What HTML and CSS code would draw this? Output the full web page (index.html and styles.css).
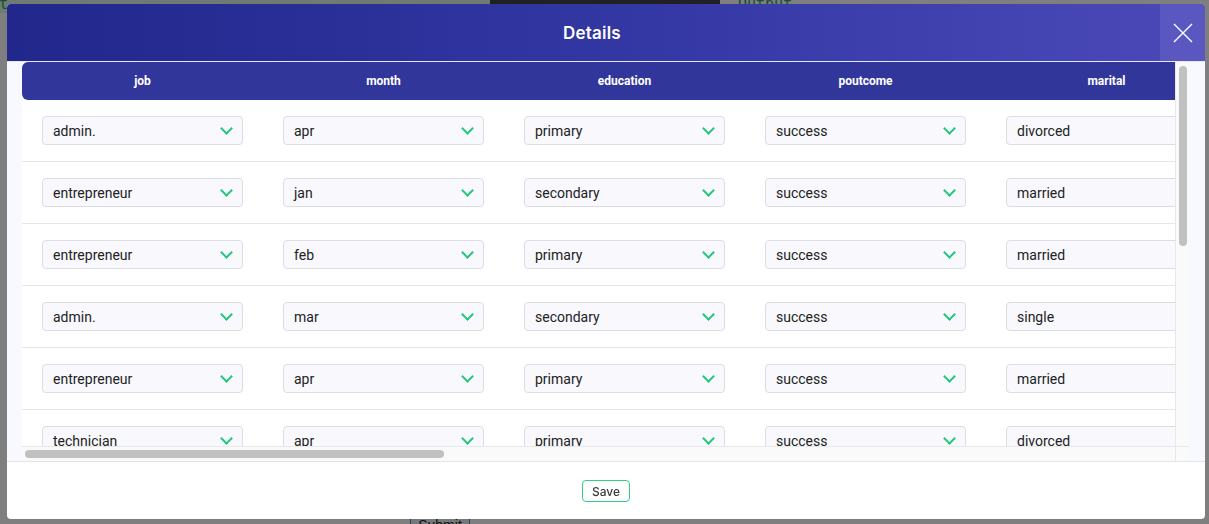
FILE: index.html
```html
<!DOCTYPE html>
<html lang="en">
<head>
<meta charset="utf-8">
<title>Details</title>
<link rel="stylesheet" href="styles.css">
</head>
<body>
<div class="page">
  <div class="page-top">
    <span class="page-label page-in">Input</span>
    <div class="page-image"></div>
    <span class="page-label page-out">Output</span>
  </div>
  <div class="page-bottom">
    <button class="page-submit">Submit</button>
  </div>
</div>

<div class="overlay">
  <div class="modal">
    <div class="modal-header">
      <h2 class="modal-title">Details</h2>
      <button class="modal-close" aria-label="Close">
        <svg width="20" height="20" viewBox="0 0 20 20"><path d="M1 1L19 19M19 1L1 19" stroke="#fff" stroke-width="1.4" fill="none"/></svg>
      </button>
    </div>
    <div class="modal-body">
      <div class="table-frame">
        <div class="table-view">
          <table class="grid">
            <thead>
              <tr><th>job</th><th>month</th><th>education</th><th>poutcome</th><th>marital</th><th>default</th><th>housing</th><th>loan</th><th>contact</th><th>day_of_week</th><th>age_group</th><th>balance_band</th><th>y</th></tr>
            </thead>
            <tbody>
              <tr><td><div class="select">admin.</div></td><td><div class="select">apr</div></td><td><div class="select">primary</div></td><td><div class="select">success</div></td><td><div class="select">divorced</div></td><td><div class="select">no</div></td><td><div class="select">yes</div></td><td><div class="select">no</div></td><td><div class="select">cellular</div></td><td><div class="select">mon</div></td><td><div class="select">adult</div></td><td><div class="select">low</div></td><td><div class="select">no</div></td></tr>
              <tr><td><div class="select">entrepreneur</div></td><td><div class="select">jan</div></td><td><div class="select">secondary</div></td><td><div class="select">success</div></td><td><div class="select">married</div></td><td><div class="select">no</div></td><td><div class="select">no</div></td><td><div class="select">no</div></td><td><div class="select">telephone</div></td><td><div class="select">tue</div></td><td><div class="select">adult</div></td><td><div class="select">medium</div></td><td><div class="select">yes</div></td></tr>
              <tr><td><div class="select">entrepreneur</div></td><td><div class="select">feb</div></td><td><div class="select">primary</div></td><td><div class="select">success</div></td><td><div class="select">married</div></td><td><div class="select">no</div></td><td><div class="select">yes</div></td><td><div class="select">yes</div></td><td><div class="select">cellular</div></td><td><div class="select">wed</div></td><td><div class="select">senior</div></td><td><div class="select">high</div></td><td><div class="select">no</div></td></tr>
              <tr><td><div class="select">admin.</div></td><td><div class="select">mar</div></td><td><div class="select">secondary</div></td><td><div class="select">success</div></td><td><div class="select">single</div></td><td><div class="select">no</div></td><td><div class="select">no</div></td><td><div class="select">no</div></td><td><div class="select">cellular</div></td><td><div class="select">thu</div></td><td><div class="select">young</div></td><td><div class="select">low</div></td><td><div class="select">yes</div></td></tr>
              <tr><td><div class="select">entrepreneur</div></td><td><div class="select">apr</div></td><td><div class="select">primary</div></td><td><div class="select">success</div></td><td><div class="select">married</div></td><td><div class="select">yes</div></td><td><div class="select">yes</div></td><td><div class="select">no</div></td><td><div class="select">telephone</div></td><td><div class="select">fri</div></td><td><div class="select">adult</div></td><td><div class="select">medium</div></td><td><div class="select">no</div></td></tr>
              <tr><td><div class="select">technician</div></td><td><div class="select">apr</div></td><td><div class="select">primary</div></td><td><div class="select">success</div></td><td><div class="select">divorced</div></td><td><div class="select">no</div></td><td><div class="select">no</div></td><td><div class="select">yes</div></td><td><div class="select">cellular</div></td><td><div class="select">mon</div></td><td><div class="select">senior</div></td><td><div class="select">high</div></td><td><div class="select">no</div></td></tr>
              <tr><td><div class="select">services</div></td><td><div class="select">may</div></td><td><div class="select">tertiary</div></td><td><div class="select">failure</div></td><td><div class="select">single</div></td><td><div class="select">no</div></td><td><div class="select">yes</div></td><td><div class="select">no</div></td><td><div class="select">cellular</div></td><td><div class="select">tue</div></td><td><div class="select">young</div></td><td><div class="select">low</div></td><td><div class="select">yes</div></td></tr>
            </tbody>
          </table>
        </div>
        <div class="vscroll"><div class="vthumb"></div></div>
        <div class="hscroll"><div class="hthumb"></div></div>
        <div class="scroll-corner"></div>
      </div>
    </div>
    <div class="modal-footer">
      <button class="save-btn">Save</button>
    </div>
  </div>
</div>
</body>
</html>
```

FILE: styles.css
```css
* { box-sizing: border-box; }

html, body {
  margin: 0;
  height: 100%;
  overflow: hidden;
}

body {
  background: #ffffff;
  font-family: Roboto, "Liberation Sans", Arial, sans-serif;
}

/* ---------- page behind the dialog ---------- */
.page {
  height: 100vh;
  display: flex;
  flex-direction: column;
  justify-content: space-between;
}

.page-top {
  display: flex;
  align-items: flex-start;
  margin-top: -5px;
  height: 40px;
}

.page-label {
  font-family: "DejaVu Sans Mono", monospace;
  font-size: 15px;
  color: #2aa35a;
  line-height: 18px;
}

.page-in {
  margin-left: -37px;
  width: 527px;
  background: #dff5e6;
}

.page-image {
  width: 230px;
  height: 40px;
  background: #3e4348;
}

.page-out {
  margin-left: 18px;
}

.page-bottom {
  padding-left: 410px;
  margin-bottom: -14px;
}

.page-submit {
  width: 60px;
  height: 26px;
  border: 1px solid #2f9e8f;
  background: #e8f3f8;
  color: #222;
  font-size: 14px;
  font-family: "Liberation Sans", Arial, sans-serif;
  padding: 0;
}

/* ---------- overlay & modal ---------- */
.overlay {
  position: fixed;
  inset: 0;
  background: rgba(0, 0, 0, 0.5);
  padding: 4px 4px 5px 7px;
  display: flex;
}

.modal {
  flex: 1;
  display: flex;
  flex-direction: column;
  background: #ffffff;
  border-radius: 4px;
  overflow: hidden;
}

.modal-header {
  height: 58px;
  flex: none;
  display: flex;
  align-items: stretch;
  background: linear-gradient(90deg, #22278c 0%, #3035a0 45%, #4b49b8 100%);
  border-bottom: 1px solid #e6e6f5;
}

.modal-title {
  flex: 1;
  margin: 0;
  padding-left: 17px;
  display: flex;
  align-items: center;
  justify-content: center;
  color: #ffffff;
  font-family: Inter, "Open Sans", sans-serif;
  font-weight: 600;
  font-size: 17px;
  letter-spacing: 0.2px;
}

.modal-close {
  width: 45px;
  flex: none;
  border: 0;
  padding: 0;
  margin: 0;
  background: #5a57c0;
  display: flex;
  align-items: center;
  justify-content: center;
  cursor: pointer;
}

.modal-body {
  height: 399px;
  flex: none;
  background: #f8f8ff;
  padding: 0 16px 0 15px;
}

/* table with its scrollbars */
.table-frame {
  height: 100%;
  display: grid;
  grid-template-columns: 1fr 14px;
  grid-template-rows: 1fr 15px;
  background: #ffffff;
}

.table-view {
  overflow: hidden;
  min-width: 0;
  min-height: 0;
}

.vscroll {
  background: #fafafa;
  border-left: 1px solid #e8e8e8;
  padding: 4px 0 0 3px;
}

.vthumb {
  width: 8px;
  height: 180px;
  border-radius: 4px;
  background: #c1c1c1;
}

.hscroll {
  background: #fafafa;
  border-top: 1px solid #e8e8e8;
  padding: 3px 0 0 3px;
}

.hthumb {
  width: 419px;
  height: 8px;
  border-radius: 4px;
  background: #c1c1c1;
}

.scroll-corner {
  background: #fafafa;
  border-top: 1px solid #e8e8e8;
  border-left: 1px solid #e8e8e8;
}

.grid {
  border-collapse: separate;
  border-spacing: 0;
  table-layout: fixed;
  width: 3133px;
}

.grid th {
  width: 241px;
  height: 38px;
  padding: 0;
  background: #31369b;
  color: #ffffff;
  font-weight: 700;
  font-size: 12px;
  text-align: center;
}

.grid th:first-child {
  border-radius: 6px 0 0 6px;
}

.grid th:last-child {
  border-radius: 0 6px 6px 0;
}

.grid td {
  height: 62px;
  padding: 0 20px;
  border-bottom: 1px solid #e6e6ea;
  background: #ffffff;
  vertical-align: middle;
}

.select {
  height: 29px;
  border: 1px solid #dcdce4;
  border-radius: 4px;
  background: #f8f8fd;
  display: flex;
  align-items: center;
  justify-content: space-between;
  padding: 0 10px 0 10px;
  font-size: 14px;
  color: #222222;
}

.select::after {
  content: "";
  width: 7px;
  height: 7px;
  border-right: 2px solid #22c77c;
  border-bottom: 2px solid #22c77c;
  transform: rotate(45deg);
  margin-top: -4px;
  margin-right: 1px;
  flex: none;
}

/* ---------- footer ---------- */
.modal-footer {
  flex: 1;
  border-top: 1px solid #e4e4e8;
  display: flex;
  align-items: center;
  justify-content: center;
}

.save-btn {
  width: 48px;
  height: 22px;
  padding: 0;
  border: 1px solid #2fcf86;
  border-radius: 4px;
  background: #ffffff;
  color: #3a3a3a;
  font-family: Inter, "Open Sans", sans-serif;
  font-weight: 500;
  font-size: 12px;
  margin-top: 1px;
  cursor: pointer;
}
```
